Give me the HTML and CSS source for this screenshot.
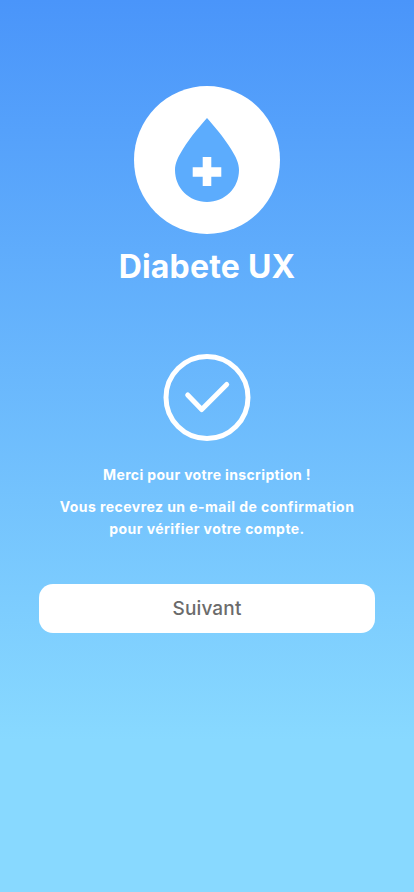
FILE: index.html
```html
<!DOCTYPE html>
<html>
	<head>
		<meta charset="UTF-8">
		<title>Diabete UX</title>
		<meta name="viewport" content="width=device-width, initial-scale=1.0">
		<link rel="stylesheet" href="styles.css">
	</head>
	<body>
		<main class="screen">
			<div class="logo">
				<svg class="drop" viewBox="0 0 64 84" width="64" height="84">
					<path fill="#5cacfd" d="M32 0C38 7 48 18 56 31C61 39 64 45 64 52C64 70 50 84 32 84C14 84 0 70 0 52C0 45 3 39 8 31C16 18 26 7 32 0Z"/>
					<path fill="#fff" d="M27.700 39H36.300V49.300H46.300V58.700H36.300V68H27.700V58.700H17.700V49.300H27.700Z"/>
				</svg>
			</div>
			<h1 class="title">Diabete UX</h1>
			<svg class="check" viewBox="0 0 88 88" width="88" height="88">
				<circle cx="44" cy="43.500" r="41" fill="none" stroke="#fff" stroke-width="5"/>
				<path d="M24.700 41L38.700 55.500L63.700 30.500" fill="none" stroke="#fff" stroke-width="5" stroke-linecap="round" stroke-linejoin="round"/>
			</svg>
			<p class="thanks">Merci pour votre inscription !</p>
			<p class="info">Vous recevrez un e-mail de confirmation<br>pour vérifier votre compte.</p>
			<button class="next">Suivant</button>
		</main>
	</body>
</html>
```

FILE: styles.css
```css
*{
	margin: 0;
	padding: 0;
	box-sizing: border-box;
}
html, body{
	height: 100%;
}
body{
	background: linear-gradient(180deg, #4a95fa 0%, #88d9ff 83%, #88d9ff 100%);
	font-family: Inter, "Open Sans", "Liberation Sans", sans-serif;
	color: white;
}
.screen{
	height: 892px;
	padding-top: 86px;
	display: flex;
	flex-direction: column;
	align-items: center;
	overflow: hidden;
}
.logo{
	width: 146px;
	height: 148px;
	border-radius: 50%;
	background: white;
	display: flex;
	justify-content: center;
	padding-top: 32px;
}
.drop{
	display: block;
}
.title{
	margin-top: 13px;
	height: 40px;
	line-height: 40px;
	font-size: 32px;
	font-weight: 700;
	letter-spacing: 0.2px;
}
.check{
	display: block;
	margin-top: 67px;
}
.thanks{
	margin-top: 23px;
	line-height: 20px;
	font-size: 14px;
	font-weight: 700;
	letter-spacing: 0.35px;
}
.info{
	margin-top: 11px;
	line-height: 22px;
	font-size: 14px;
	font-weight: 700;
	letter-spacing: 0.45px;
	text-align: center;
}
.next{
	margin-top: 44px;
	width: 336px;
	height: 49px;
	border: none;
	border-radius: 14px;
	background: white;
	color: #6b6b6b;
	font-family: inherit;
	font-size: 19px;
	font-weight: 500;
	letter-spacing: 0.15px;
}
```
